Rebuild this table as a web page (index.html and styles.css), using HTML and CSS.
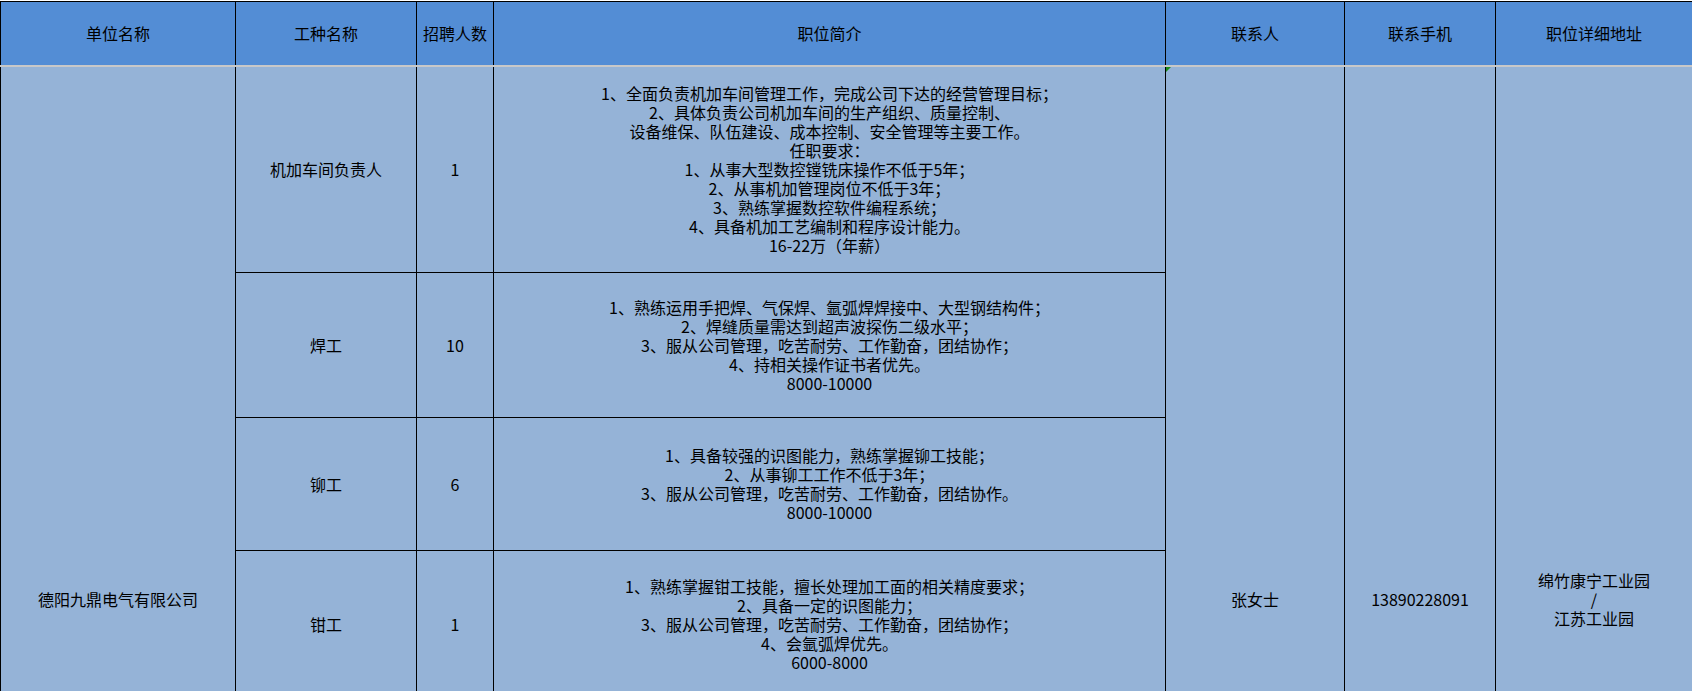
FILE: index.html
```html
<!DOCTYPE html>
<html lang="zh-CN">
<head>
<meta charset="utf-8">
<title>招聘信息</title>
<link rel="stylesheet" href="styles.css">
</head>
<body>
<table class="sheet">
  <colgroup>
    <col class="c-unit">
    <col class="c-job">
    <col class="c-num">
    <col class="c-desc">
    <col class="c-contact">
    <col class="c-phone">
    <col class="c-addr">
  </colgroup>
  <thead>
    <tr class="head">
      <th>单位名称</th>
      <th>工种名称</th>
      <th>招聘人数</th>
      <th>职位简介</th>
      <th>联系人</th>
      <th>联系手机</th>
      <th>职位详细地址</th>
    </tr>
  </thead>
  <tbody>
    <tr class="r1">
      <td rowspan="5">德阳九鼎电气有限公司</td>
      <td>机加车间负责人</td>
      <td>1</td>
      <td class="desc">1、全面负责机加车间管理工作，完成公司下达的经营管理目标；<br>2、具体负责公司机加车间的生产组织、质量控制、<br>设备维保、队伍建设、成本控制、安全管理等主要工作。<br>任职要求：<br>1、从事大型数控镗铣床操作不低于5年；<br>2、从事机加管理岗位不低于3年；<br>3、熟练掌握数控软件编程系统；<br>4、具备机加工艺编制和程序设计能力。<br>16-22万（年薪）</td>
      <td rowspan="5" class="flagged">张女士</td>
      <td rowspan="5">13890228091</td>
      <td rowspan="5">绵竹康宁工业园<br>/<br>江苏工业园</td>
    </tr>
    <tr class="r2">
      <td>焊工</td>
      <td>10</td>
      <td class="desc">1、熟练运用手把焊、气保焊、氩弧焊焊接中、大型钢结构件；<br>2、焊缝质量需达到超声波探伤二级水平；<br>3、服从公司管理，吃苦耐劳、工作勤奋，团结协作；<br>4、持相关操作证书者优先。<br>8000-10000</td>
    </tr>
    <tr class="r3">
      <td>铆工</td>
      <td>6</td>
      <td class="desc">1、具备较强的识图能力，熟练掌握铆工技能；<br>2、从事铆工工作不低于3年；<br>3、服从公司管理，吃苦耐劳、工作勤奋，团结协作。<br>8000-10000</td>
    </tr>
    <tr class="r4">
      <td>钳工</td>
      <td>1</td>
      <td class="desc">1、熟练掌握钳工技能，擅长处理加工面的相关精度要求；<br>2、具备一定的识图能力；<br>3、服从公司管理，吃苦耐劳、工作勤奋，团结协作；<br>4、会氩弧焊优先。<br>6000-8000</td>
    </tr>
    <tr class="r5">
      <td></td>
      <td></td>
      <td></td>
    </tr>
  </tbody>
</table>
</body>
</html>
```

FILE: styles.css
```css
html, body {
  margin: 0;
  padding: 0;
  background: #ffffff;
  overflow: hidden;
}

body {
  padding-top: 1px;
  font-family: "Noto Sans CJK SC", "Noto Sans", sans-serif;
  font-size: 16px;
  line-height: 19px;
  color: #000000;
}

.sheet {
  border-collapse: collapse;
  table-layout: fixed;
  width: 1692px;
}

.c-unit { width: 235px; }
.c-job { width: 181px; }
.c-num { width: 77px; }
.c-desc { width: 672px; }
.c-contact { width: 179px; }
.c-phone { width: 151px; }
.c-addr { width: 197px; }

.sheet th,
.sheet td {
  padding: 0;
  border: 1px solid #000000;
  text-align: center;
  vertical-align: middle;
  font-weight: normal;
  white-space: nowrap;
}

.sheet th {
  background: #538dd5;
  border-bottom: 2px solid #c8c8c8;
}

.sheet td {
  background: #95b3d7;
}

.head { height: 64px; }
.r1 { height: 207px; }
.r2 { height: 145px; }
.r3 { height: 133px; }
.r4 { height: 148px; }
.r5 { height: 434px; }

.flagged {
  position: relative;
}

.flagged::before {
  content: "";
  position: absolute;
  top: 0;
  left: 0;
  width: 0;
  height: 0;
  border-top: 5px solid #1a8c1a;
  border-right: 5px solid transparent;
}
```
